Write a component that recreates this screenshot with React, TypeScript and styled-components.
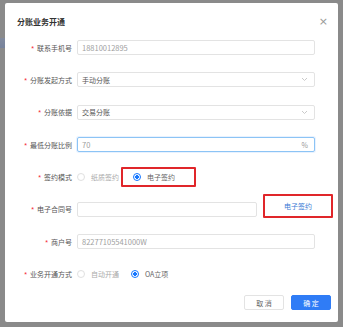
import { FunctionComponent, ReactNode } from 'react';
import styled, { createGlobalStyle } from 'styled-components';

const GlobalStyle = createGlobalStyle`
    html, body {
        margin: 0;
        padding: 0;
        background: #8a8a8a;
    }
    body {
        font-family: 'Noto Sans CJK SC', 'Noto Sans', sans-serif;
    }
`;

type Field = {
    label: string;
    kind: 'input' | 'select' | 'percent' | 'radio' | 'contract';
    value?: string;
    options?: string[];
    checked?: number;
};

const FIELDS: Field[] = [
    { label: '联系手机号', kind: 'input', value: '18810012895' },
    { label: '分账发起方式', kind: 'select', value: '手动分账' },
    { label: '分账依据', kind: 'select', value: '交易分账' },
    { label: '最低分账比例', kind: 'percent', value: '70' },
    { label: '签约模式', kind: 'radio', options: ['纸质签约', '电子签约'], checked: 1 },
    { label: '电子合同号', kind: 'contract' },
    { label: '商户号', kind: 'input', value: '82277105541000W' },
    { label: '业务开通方式', kind: 'radio', options: ['自动开通', 'OA立项'], checked: 1 },
];

const Chevron = () => (
    <svg width="7" height="5" viewBox="0 0 7 5">
        <path d="M1 1 L3.5 3.5 L6 1" fill="none" stroke="#c4c4c4" strokeWidth="0.9" />
    </svg>
);

const renderControl = (field: Field): ReactNode => {
    switch (field.kind) {
        case 'input':
            return <Input><span>{field.value}</span></Input>;
        case 'select':
            return (
                <Input $dark>
                    <span>{field.value}</span>
                    <Chevron />
                </Input>
            );
        case 'percent':
            return (
                <Input $focused>
                    <span>{field.value}</span>
                    <Suffix>%</Suffix>
                </Input>
            );
        case 'radio':
            return (
                <RadioGroup>
                    {field.options!.map((opt, i) => {
                        const radio = (
                            <RadioItem key={opt} $checked={i === field.checked}>
                                <RadioDot $checked={i === field.checked} />
                                {opt}
                            </RadioItem>
                        );
                        if (i === field.checked && field.label === '签约模式') {
                            return <Highlight key={opt} $w={75} $h={20} $pad={10}>{radio}</Highlight>;
                        }
                        return radio;
                    })}
                </RadioGroup>
            );
        case 'contract':
            return (
                <ContractRow>
                    <Input $w={180} />
                    <Highlight $w={70} $h={24} $pad={0} $center $lift>
                        <LinkText>电子签约</LinkText>
                    </Highlight>
                </ContractRow>
            );
    }
};

const App: FunctionComponent = () => {
    return (
        <Backdrop>
            <GlobalStyle />
            <PageHint />
            <Dialog>
                <Header>
                    <Title>分账业务开通</Title>
                    <Close>×</Close>
                </Header>
                <Form>
                    {FIELDS.map((field, index) => (
                        <FormRow key={`field-${index}`}>
                            <Label><Required>*</Required>{field.label}</Label>
                            {renderControl(field)}
                        </FormRow>
                    ))}
                </Form>
                <Footer>
                    <Button>取 消</Button>
                    <Button $primary>确 定</Button>
                </Footer>
            </Dialog>
        </Backdrop>
    );
};

export default App;

const Backdrop = styled.div`
    position: relative;
    width: 343px;
    height: 327px;
    box-sizing: border-box;
    padding: 3px 5px 5px 5px;
    background: #8a8a8a;
    overflow: hidden;
`;

const PageHint = styled.div`
    position: absolute;
    left: 0;
    top: 38px;
    width: 5px;
    height: 10px;
    background: linear-gradient(#7d8aa6, #6e7fa3);
    opacity: 0.7;
`;

const Dialog = styled.div`
    position: relative;
    width: 333px;
    height: 319px;
    background: #fff;
    border-radius: 2px;
    display: flex;
    flex-direction: column;
`;

const Header = styled.div`
    height: 34px;
    display: flex;
    align-items: center;
    justify-content: space-between;
    padding: 2px 10px 0 12px;
    box-sizing: border-box;
`;

const Title = styled.div`
    font-size: 8px;
    font-weight: 700;
    color: #333;
`;

const Close = styled.div`
    font-family: 'DejaVu Sans', sans-serif;
    font-size: 11px;
    color: #999;
    line-height: 1;
`;

const Form = styled.div`
    display: flex;
    flex-direction: column;
    gap: 17.4px;
    padding-top: 3px;
`;

const FormRow = styled.div`
    display: grid;
    grid-template-columns: 67px 238px;
    grid-template-rows: 15px;
    column-gap: 5px;
    align-items: center;
    height: 15px;
`;

const Label = styled.div`
    text-align: right;
    font-size: 7px;
    color: #555;
    white-space: nowrap;
`;

const Required = styled.span`
    color: #f5222d;
    margin-right: 3px;
    font-family: 'Liberation Sans', sans-serif;
`;

const Input = styled.div<{ $dark?: boolean; $focused?: boolean; $w?: number }>`
    box-sizing: border-box;
    flex-shrink: 0;
    height: 15px;
    width: ${p => (p.$w ? `${p.$w}px` : '100%')};
    border: 1px solid ${p => (p.$focused ? '#8cc4f5' : '#e3e3e3')};
    border-radius: 2px;
    background: #fff;
    display: flex;
    align-items: center;
    justify-content: space-between;
    padding: 0 6px 0 4px;
    font-family: 'Noto Sans CJK SC', 'Noto Sans', sans-serif;
    font-size: ${p => (p.$dark ? '7px' : '7.5px')};
    color: ${p => (p.$dark ? '#555' : '#a0a0a0')};
    box-shadow: ${p => (p.$focused ? '0 0 0 1px rgba(64,150,255,0.12)' : 'none')};
`;

const Suffix = styled.span`
    color: #999;
    font-size: 7px;
`;

const RadioGroup = styled.div`
    display: flex;
    align-items: center;
    gap: 12px;
`;

const RadioItem = styled.div<{ $checked: boolean }>`
    display: flex;
    align-items: center;
    gap: 6px;
    font-size: 7px;
    color: ${p => (p.$checked ? '#666' : '#aaa')};
    white-space: nowrap;
`;

const RadioDot = styled.span<{ $checked: boolean }>`
    box-sizing: border-box;
    width: 8px;
    height: 8px;
    border-radius: 50%;
    border: 1px solid ${p => (p.$checked ? '#1677ff' : '#e0e0e0')};
    background: ${p => (p.$checked ? 'radial-gradient(circle, #1677ff 0 1.6px, #fff 2px)' : '#fff')};
`;

const Highlight = styled.div<{ $w: number; $h: number; $pad: number; $center?: boolean; $lift?: boolean }>`
    box-sizing: border-box;
    flex-shrink: 0;
    width: ${p => p.$w}px;
    height: ${p => p.$h}px;
    margin-left: ${p => (p.$pad ? '-10px' : '0')};
    transform: ${p => (p.$lift ? 'translateY(-3px)' : 'none')};
    padding-left: ${p => p.$pad}px;
    border: 2px solid #e0262a;
    border-radius: 1px;
    display: flex;
    align-items: center;
    justify-content: ${p => (p.$center ? 'center' : 'flex-start')};
`;

const ContractRow = styled.div`
    display: flex;
    align-items: center;
    gap: 6px;
    height: 15px;
`;

const LinkText = styled.span`
    color: #3a7bd5;
    font-size: 7px;
`;

const Footer = styled.div`
    margin-top: auto;
    display: flex;
    justify-content: flex-end;
    gap: 7px;
    padding: 0 7px 12px 0;
`;

const Button = styled.div<{ $primary?: boolean }>`
    box-sizing: border-box;
    width: 40px;
    height: 15px;
    border-radius: 2px;
    display: flex;
    align-items: center;
    justify-content: center;
    font-size: 7px;
    color: ${p => (p.$primary ? '#fff' : '#666')};
    background: ${p => (p.$primary ? '#2f7cf6' : '#fff')};
    border: 1px solid ${p => (p.$primary ? '#2f7cf6' : '#e3e3e3')};
`;
